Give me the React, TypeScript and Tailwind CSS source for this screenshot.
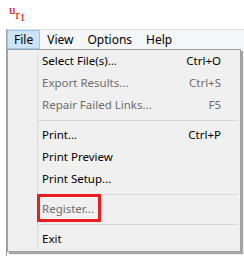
import React from 'react';

type Entry = { label?: string; shortcut?: string; disabled?: boolean; sep?: boolean; mark?: boolean };

const entries: Entry[] = [
  { label: 'Select File(s)...', shortcut: 'Ctrl+O' },
  { label: 'Export Results...', shortcut: 'Ctrl+S', disabled: true },
  { label: 'Repair Failed Links...', shortcut: 'F5', disabled: true },
  { sep: true },
  { label: 'Print...', shortcut: 'Ctrl+P' },
  { label: 'Print Preview' },
  { label: 'Print Setup...' },
  { sep: true },
  { label: 'Register...', disabled: true, mark: true },
  { sep: true },
  { label: 'Exit' },
];

const menus = ['File', 'View', 'Options', 'Help'];

export default function App() {
  return (
    <div className="w-[244px] h-[256px] bg-white overflow-hidden font-['Noto_Sans',sans-serif] text-[11.5px] text-black">
      {/* formula label */}
      <div className="h-[29px] pl-[9px] pt-[3px] font-['Liberation_Serif',serif] text-[13px] leading-none text-[#e00000]">
        u
        <span className="relative top-[5px]">
          r<span className="relative top-[2px] text-[11px]">1</span>
        </span>
      </div>

      <div className="ml-[6px] h-[227px] border-l border-[#a0a0a0] relative">
        {/* menu bar */}
        <div className="h-[20px] flex border-t border-[#dcdcdc] bg-[#f5f6f7] leading-none text-[12px]">
          {menus.map((m, i) => (
            <div
              key={m}
              className={`px-[6px] flex items-center border ${
                i === 0 ? 'bg-[#cce4f7] border-[#99c9ef]' : 'border-transparent'
              }`}
            >
              {m}
            </div>
          ))}
        </div>

        {/* File dropdown */}
        <div className="absolute left-0 top-[20px] w-[234px] h-[203px] flex bg-[#f0f0f0] border border-[#a0a0a0] shadow-[2px_2px_1px_rgba(0,0,0,0.35)]">
          <div className="w-[30px] py-[2px] flex">
            <div className="ml-auto w-[1px] bg-[#dadada]" />
          </div>
          <div className="flex-1 flex flex-col">
            {entries.map((e, i) =>
              e.sep ? (
                <div key={i} className="h-[8px] flex items-center mr-[2px]">
                  <div className="h-[1px] w-full bg-[#d7d7d7]" />
                </div>
              ) : (
                <div
                  key={i}
                  className={`relative h-[22px] pl-[4px] pr-[19px] flex items-center justify-between ${
                    e.disabled ? 'text-[#6d6d6d]' : 'text-black'
                  }`}
                >
                  <span>{e.label}</span>
                  {e.shortcut && <span>{e.shortcut}</span>}
                  {e.mark && (
                    <div className="absolute left-[-1px] top-[-4px] w-[64px] h-[28px] border-[3px] border-[#ec1c24]" />
                  )}
                </div>
              )
            )}
          </div>
        </div>
      </div>
    </div>
  );
}
